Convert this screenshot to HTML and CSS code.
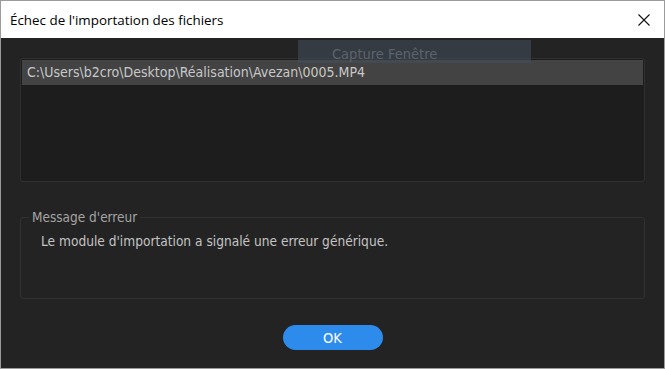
FILE: index.html
```html
<!DOCTYPE html>
<html lang="fr">
<head>
    <meta charset="UTF-8">
    <meta name="viewport" content="width=device-width, initial-scale=1.0">
    <title>Échec de l'importation des fichiers</title>
    <link rel="stylesheet" href="styles.css">
</head>
<body>
    <div class="window">
        <header class="titlebar">
            <h1>Échec de l'importation des fichiers</h1>
            <button class="close" type="button" aria-label="Fermer">
                <svg width="12" height="12" viewBox="0 0 12 12">
                    <path d="M0.5 0.5 L11.5 11.5 M11.5 0.5 L0.5 11.5" stroke="#111" stroke-width="1.1" fill="none"/>
                </svg>
            </button>
        </header>
        <div class="content">
            <div class="capture">Capture Fenêtre</div>
            <div class="filelist">
                <div class="file selected">C:\Users\b2cro\Desktop\Réalisation\Avezan\0005.MP4</div>
            </div>
            <fieldset class="errorbox">
                <legend>Message d'erreur</legend>
                <p>Le module d'importation a signalé une erreur générique.</p>
            </fieldset>
            <div class="actions">
                <button class="ok_button" type="button">OK</button>
            </div>
        </div>
    </div>
</body>
</html>
```

FILE: styles.css
```css
* {
    box-sizing: border-box;
}
body {
    margin: 0;
    padding: 0;
    background-color: #232323;
    font-family: "DejaVu Sans Condensed", "Liberation Sans", sans-serif;
}
.window {
    position: relative;
    width: 665px;
    height: 369px;
    border: 1px solid #9b9b9b;
    background-color: #232323;
    display: flex;
    flex-direction: column;
}
.titlebar {
    height: 37px;
    background: #ffffff;
    display: flex;
    align-items: center;
    justify-content: space-between;
    padding: 0 14px 0 9px;
}
.titlebar h1 {
    margin: 0;
    font-family: "Open Sans", "Liberation Sans", sans-serif;
    font-weight: normal;
    font-size: 13.4px;
    color: #000000;
}
.close {
    border: none;
    background: none;
    padding: 0;
    width: 12px;
    height: 12px;
    display: flex;
}
.content {
    flex: 1;
    padding: 20px 19px 0 19px;
    display: flex;
    flex-direction: column;
}
.capture {
    position: absolute;
    left: 297px;
    top: 39px;
    width: 233px;
    height: 23px;
    padding: 3px 0 0 34px;
    background: rgba(70, 80, 92, 0.55);
    color: #5d636b;
    font-size: 14.5px;
    line-height: 23px;
    z-index: 2;
}
.filelist {
    height: 124px;
    border: 1px solid #303030;
    border-radius: 3px;
    background-color: #1d1d1d;
    padding: 1px;
}
.file {
    height: 25px;
    line-height: 25px;
    padding-left: 5px;
    font-size: 14px;
    color: #c8c8c8;
}
.file.selected {
    background-color: #434343;
}
.errorbox {
    margin: 27px 0 0 0;
    height: 90px;
    border: 1px solid #313131;
    border-radius: 3px;
    padding: 0 0 0 20px;
}
.errorbox legend {
    margin-left: -12px;
    padding: 0 3px;
    font-size: 13.5px;
    color: #a3a3a3;
}
.errorbox p {
    margin: 8px 0 0 0;
    font-size: 13.6px;
    color: #c3c3c3;
}
.actions {
    display: flex;
    justify-content: center;
    margin-top: 26px;
}
.ok_button {
    width: 100px;
    height: 25px;
    border: none;
    border-radius: 13px;
    background-color: #2d8ceb;
    color: #ffffff;
    font-family: inherit;
    font-size: 14.5px;
    padding: 0;
}
```
